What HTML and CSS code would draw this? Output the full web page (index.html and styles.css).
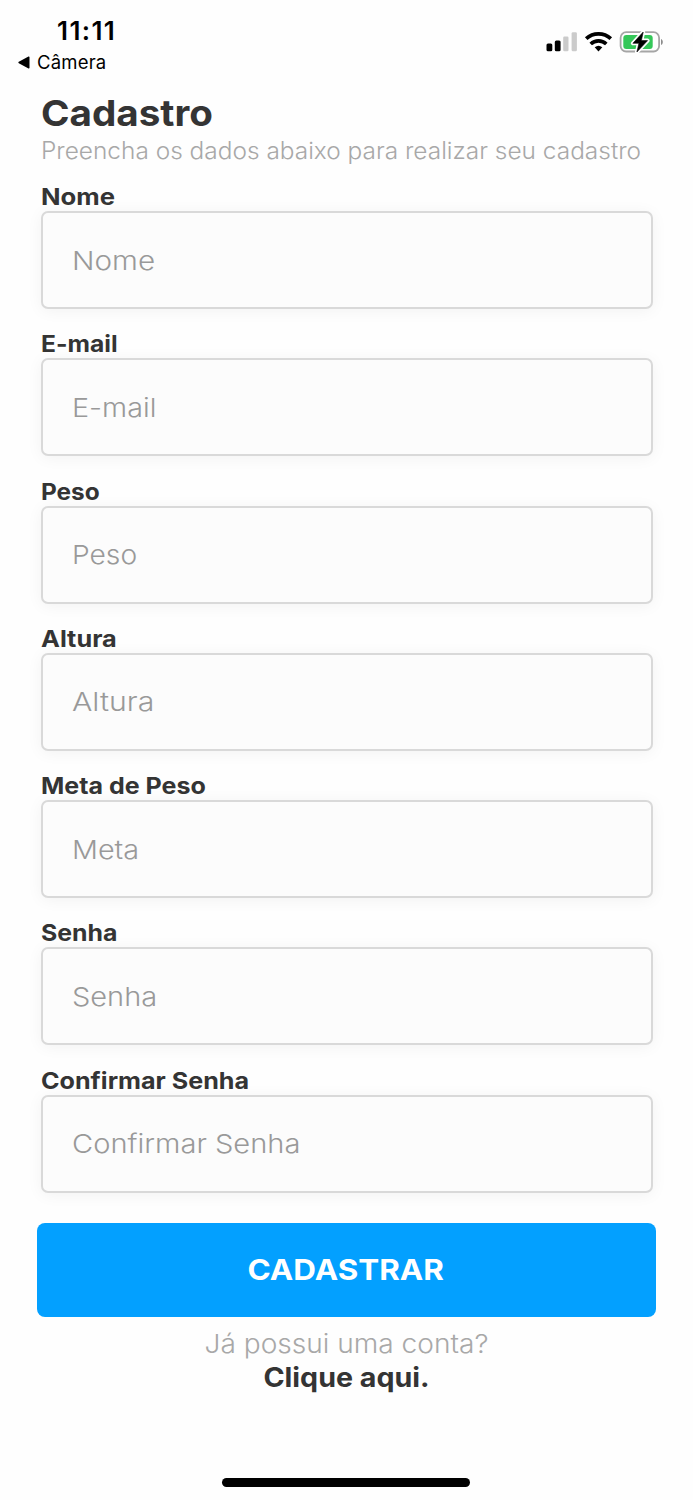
FILE: index.html
```html
<!DOCTYPE html>
<html lang="pt-BR">
<head>
<meta charset="utf-8">
<title>Cadastro</title>
<link rel="stylesheet" href="styles.css">
</head>
<body>
<header class="status">
  <div class="status-left">
    <div class="clock">11:11</div>
    <div class="back"><svg width="13" height="13" viewBox="0 0 13 13"><path d="M11.5 1.2v10.6c0 .7-.5.9-1 .6L.8 7.200c-.6-.4-.6-1 0-1.400L10.500.6c.5-.3 1-.1 1 .6z"/></svg><span>Câmera</span></div>
  </div>
  <svg class="status-icons" width="120" height="26" viewBox="0 0 120 26">
    <rect x="1.500" y="13.600" width="5.800" height="7.600" rx="1.500"/>
    <rect x="9.800" y="10.600" width="5.800" height="10.600" rx="1.500"/>
    <rect x="18.200" y="6.500" width="5.300" height="14.700" rx="1.300" fill="#cbcbcb"/>
    <rect x="26.600" y="2.200" width="5.300" height="19" rx="1.300" fill="#cbcbcb"/>
    <g fill="none" stroke="#000" stroke-width="3.700">
      <path d="M41.200 8.700a18 18 0 0 1 24.600 0"/>
      <path d="M45.700 14a11.500 11.500 0 0 1 15.600 0"/>
    </g>
    <path d="M49.700 17.300a6 6 0 0 1 7.600 0l-3.800 4.200z"/>
    <rect x="75.600" y="2.200" width="38.500" height="19.300" rx="5.600" fill="none" stroke="#a6a6a6" stroke-width="1.800"/>
    <path d="M116 8.900c2.400.9 2.400 5.200 0 6.100z" fill="#8d8d8d"/>
    <rect x="78.300" y="4.900" width="29.400" height="14" rx="3" fill="#35c759"/>
    <path d="M98.200 2L87.900 13.300h6L91.900 22l10.700-11.400h-6.200z" stroke="#fff" stroke-width="4" stroke-linejoin="round"/>
    <path d="M98.200 2L87.900 13.300h6L91.900 22l10.700-11.400h-6.200z" stroke="#000" stroke-width=".6" stroke-linejoin="round"/>
  </svg>
</header>
<main class="page">
  <h1 class="title">Cadastro</h1>
  <p class="subtitle">Preencha os dados abaixo para realizar seu cadastro</p>
  <form class="form">
    <div class="field nome"><span class="label">Nome</span><div class="input"><span class="placeholder">Nome</span></div></div>
    <div class="field email"><span class="label">E-mail</span><div class="input"><span class="placeholder">E-mail</span></div></div>
    <div class="field peso"><span class="label">Peso</span><div class="input"><span class="placeholder">Peso</span></div></div>
    <div class="field altura"><span class="label">Altura</span><div class="input"><span class="placeholder">Altura</span></div></div>
    <div class="field meta"><span class="label">Meta de Peso</span><div class="input"><span class="placeholder">Meta</span></div></div>
    <div class="field senha"><span class="label">Senha</span><div class="input"><span class="placeholder">Senha</span></div></div>
    <div class="field confirmar"><span class="label">Confirmar Senha</span><div class="input"><span class="placeholder">Confirmar Senha</span></div></div>
    <button class="submit" type="button"><span class="submit-text">CADASTRAR</span></button>
  </form>
  <p class="question">Já possui uma conta?</p>
  <a class="link">Clique aqui.</a>
</main>
<div class="home-bar"></div>
</body>
</html>
```
FILE: styles.css
```css
* { box-sizing: border-box; }
body {
  margin: 0;
  height: 1500px;
  display: flex;
  flex-direction: column;
  background: #fefefe;
  color: #343434;
  font-family: Inter, "Open Sans", sans-serif;
  overflow: hidden;
}
.status {
  height: 92px;
  flex: none;
  display: flex;
  justify-content: space-between;
  padding: 15px 28px 0 18px;
  color: #000;
}
.clock {
  padding-left: 39px;
  font-size: 26px;
  line-height: 31px;
  font-weight: 600;
  letter-spacing: 1.400px;
}
.back {
  display: flex;
  align-items: center;
  gap: 6px;
  height: 32px;
  font-size: 18.500px;
  letter-spacing: .200px;
}
.status-icons { margin-top: 15px; }
.page { padding: 0 41px; }
.title {
  margin: 0;
  width: max-content;
  font-size: 36px;
  line-height: 43px;
  font-weight: 700;
  transform: scaleX(1.072);
  transform-origin: left;
}
.subtitle {
  margin: 0;
  width: max-content;
  height: 50px;
  font-size: 23.500px;
  line-height: 31px;
  font-weight: 300;
  white-space: nowrap;
  transform: scaleX(1.039);
  transform-origin: left;
  color: #a8a8a8;
}
.form { display: flex; flex-direction: column; }
.field { display: flex; flex-direction: column; height: 147.300px; }
.label {
  align-self: flex-start;
  height: 26px;
  font-size: 23px;
  line-height: 24px;
  font-weight: 700;
  transform: scaleX(var(--label-stretch));
  transform-origin: left;
}
.input {
  display: flex;
  align-items: center;
  width: 612px;
  height: 98px;
  margin-left: -.5px;
  padding: 0 29.500px;
  border: 2px solid #d9d9d9;
  border-radius: 7px;
  background: #fcfcfc;
  box-shadow: 0 2px 16px rgba(0, 0, 0, .05);
}
.placeholder {
  font-size: 26px;
  font-weight: 300;
  color: #999;
  transform: scaleX(var(--text-stretch));
  transform-origin: left;
}
.nome { --label-stretch: 1.115; --text-stretch: 1.140; }
.email { --label-stretch: 1.070; --text-stretch: 1.105; }
.peso { --label-stretch: 1.060; --text-stretch: 1.083; }
.altura { --label-stretch: 1.100; --text-stretch: 1.163; }
.meta { --label-stretch: 1.088; --text-stretch: 1.107; }
.senha { --label-stretch: 1.080; --text-stretch: 1.115; }
.confirmar { --label-stretch: 1.092; --text-stretch: 1.118; }
.submit {
  height: 94px;
  margin: 7px -4px 0;
  padding: 0 2px 2px 0;
  border: 0;
  border-radius: 8px;
  background: #03a0ff;
  color: #fff;
  font: 700 29px Inter, "Open Sans", sans-serif;
}
.submit-text { display: inline-block; transform: scaleX(1.083); }
.question {
  margin: 10px 0 0;
  text-align: center;
  font-size: 26px;
  line-height: 34px;
  font-weight: 300;
  transform: scaleX(1.080);
  color: #a8a8a8;
}
.link {
  display: block;
  text-align: center;
  font-size: 26.500px;
  line-height: 33px;
  font-weight: 700;
  transform: scaleX(1.080);
}
.home-bar {
  width: 248px;
  height: 9px;
  margin: auto auto 13px 222px;
  border-radius: 5px;
  background: #000;
}
```
